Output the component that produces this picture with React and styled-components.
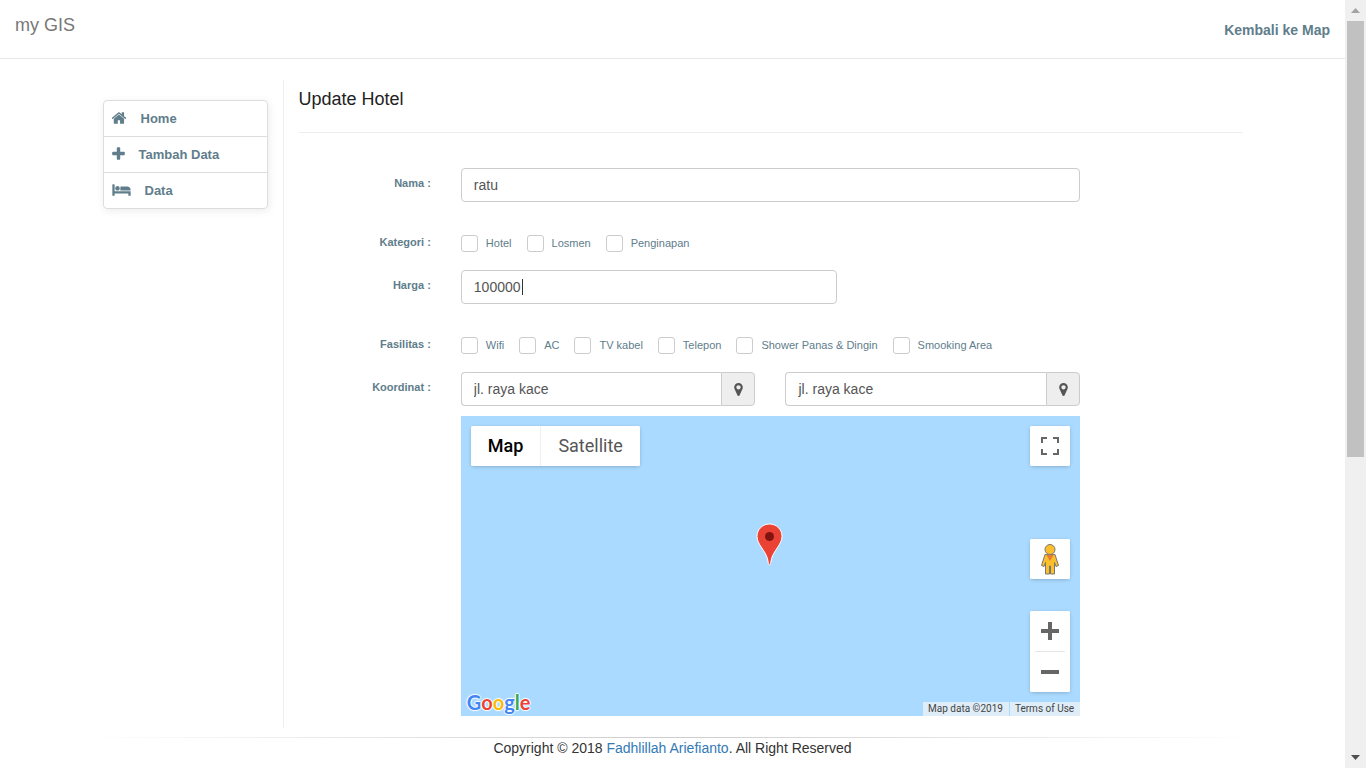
import React from 'react';
import styled, { createGlobalStyle } from 'styled-components';

const GlobalStyle = createGlobalStyle`
  * {
    box-sizing: border-box;
  }
  body {
    margin: 0;
    font-family: 'Liberation Sans', Arial, sans-serif;
    font-size: 14px;
    line-height: 20px;
    color: #333;
    background: #fff;
  }
  a {
    text-decoration: none;
  }
`;

const Screen = styled.div`
  display: flex;
  height: 100vh;
  overflow: hidden;
`;

const Page = styled.div`
  flex: 1;
  min-width: 0;
`;

const Scrollbar = styled.div`
  display: flex;
  flex-direction: column;
  align-items: center;
  width: 21px;
  background: #f0f0f0;
  .arrow {
    display: flex;
    align-items: center;
    justify-content: center;
    width: 21px;
    height: 21px;
  }
  .track {
    flex: 1;
  }
  .thumb {
    width: 17px;
    height: 60%;
    background: #c1c1c1;
  }
`;

const Navbar = styled.header`
  display: flex;
  justify-content: space-between;
  height: 59px;
  padding: 0 15px;
  border-bottom: 1px solid #e7e7e7;
  .brand {
    padding: 15px 0;
    font-size: 18px;
    color: #777;
  }
  .back {
    padding: 20px 0;
    font-weight: bold;
    color: #607d8b;
  }
`;

const Container = styled.div`
  display: flex;
  align-items: stretch;
  max-width: 1170px;
  margin: 21px auto 0;
`;

const Sidebar = styled.aside`
  width: 195px;
  padding: 20px 15px 0;
`;

const Menu = styled.nav`
  border: 1px solid #ddd;
  border-radius: 4px;
  box-shadow: 1px 2px 8px rgba(0, 0, 0, 0.08);
`;

const MenuLink = styled.a`
  display: flex;
  align-items: center;
  gap: 14px;
  height: 35px;
  padding: 0 8px;
  font-size: 13px;
  font-weight: bold;
  color: #607d8b;
  & + & {
    height: 36px;
    border-top: 1px solid #ddd;
  }
  svg {
    display: block;
    height: 16px;
    margin-bottom: 2px;
    fill: currentColor;
  }
`;

const Content = styled.main`
  flex: 1;
  min-width: 0;
  height: 648px;
  padding: 0 15px;
  border-left: 1px solid #eee;
  h1 {
    margin: 0 0 35px;
    padding: 9px 0 23px;
    border-bottom: 1px solid #eee;
    font-size: 18px;
    font-weight: normal;
    line-height: 20px;
    color: #222;
  }
`;

const FormRow = styled.div`
  display: grid;
  grid-template-columns: 2fr 10fr;
  margin: 0 -15px ${(props) => props.$gap}px;
  > label,
  > .label {
    padding: ${(props) => (props.$checks ? 0 : 6)}px 15px 0;
    font-size: 11px;
    font-weight: bold;
    line-height: 18px;
    text-align: right;
    color: #607d8b;
  }
`;

const Field = styled.div`
  position: relative;
  width: calc(${(props) => props.$cols} * 10%);
  padding: 0 15px;
`;

const TextInput = styled.input`
  display: block;
  width: 100%;
  height: 34px;
  padding: 6px 12px;
  border: 1px solid #ccc;
  border-radius: 4px;
  outline: 0;
  background: #fff;
  font: inherit;
  color: #555;
`;

const Caret = styled.span`
  position: absolute;
  top: 9px;
  left: 76px;
  width: 1px;
  height: 16px;
  background: #333;
`;

const Pair = styled.div`
  display: flex;
`;

const InputGroup = styled.div`
  display: flex;
  ${TextInput} {
    flex: 1;
    min-width: 0;
    border-right: 0;
    border-radius: 4px 0 0 4px;
  }
  .addon {
    display: flex;
    align-items: center;
    justify-content: center;
    width: 34px;
    border: 1px solid #ccc;
    border-radius: 0 4px 4px 0;
    background: #eee;
    color: #555;
  }
  svg {
    width: 9px;
    height: 13px;
    fill: currentColor;
  }
`;

const Checks = styled.div`
  display: flex;
  gap: 15px;
  height: 20px;
  padding: 0 15px;
`;

const Check = styled.label`
  display: flex;
  align-items: center;
  gap: 8px;
  font-size: 11px;
  white-space: nowrap;
  color: #607d8b;
  input {
    appearance: none;
    width: 17px;
    height: 17px;
    margin: 0;
    border: 1px solid #ccc;
    border-radius: 3px;
    background: #fff;
  }
  input:checked {
    background: #607d8b;
  }
`;

const MapBox = styled.div`
  position: relative;
  height: 300px;
  overflow: hidden;
  background: #aadaff;
  font-family: Roboto, sans-serif;
  button {
    display: flex;
    align-items: center;
    justify-content: center;
    padding: 0;
    border: 0;
    background: #fff;
    font: inherit;
  }
`;

const MapControl = styled.div`
  position: absolute;
  ${(props) => props.$place}
  display: flex;
  flex-direction: ${(props) => (props.$vertical ? 'column' : 'row')};
  align-items: center;
  overflow: hidden;
  border-radius: 2px;
  background: #fff;
  box-shadow: 0 1px 4px -1px rgba(0, 0, 0, 0.3);
  > button {
    min-width: 40px;
    height: 40px;
  }
  .type {
    padding: 0 17px;
    font-size: 18px;
    color: #565656;
  }
  .type.active {
    font-weight: 500;
    color: #000;
  }
  .type + .type {
    border-left: 1px solid #f0f0f0;
  }
  .line {
    width: 30px;
    height: 1px;
    background: #e6e6e6;
  }
`;

const Marker = styled.svg`
  position: absolute;
  top: 107px;
  left: 50%;
  width: 27px;
  height: 43px;
  margin-left: -14px;
`;

const Logo = styled.a`
  position: absolute;
  bottom: 2px;
  left: 6px;
  font-family: Lato, sans-serif;
  font-size: 20px;
  font-weight: bold;
  line-height: 24px;
  text-shadow: 1px 0 1px #fff, -1px 0 1px #fff, 0 1px 1px #fff, 0 -1px 1px #fff;
  .b {
    color: #4285f4;
  }
  .r {
    color: #ea4335;
  }
  .y {
    color: #fbbc05;
  }
  .g {
    color: #34a853;
  }
`;

const Legal = styled.div`
  position: absolute;
  right: 0;
  bottom: 0;
  display: flex;
  gap: 1px;
  font-size: 10px;
  line-height: 14px;
  > * {
    padding: 0 6px 0 5px;
    background: rgba(245, 245, 245, 0.7);
    color: #444;
  }
`;

const Footer = styled.footer`
  max-width: 1170px;
  margin: 9px auto 0;
  text-align: center;
  &::before {
    content: '';
    display: block;
    height: 1px;
    background: linear-gradient(to right, transparent, #ccc, transparent);
  }
  a {
    color: #337ab7;
  }
`;

const HomeIcon = () => (
  <svg viewBox="64 0 1664 1792" width="15">
    <path d="M1408 992v480q0 26-19 45t-45 19h-384v-384h-256v384h-384q-26 0-45-19t-19-45v-480q0-1 .5-3t.5-3l575-474 575 474q1 2 1 6zm223-69l-62 74q-8 9-21 11h-3q-13 0-21-7l-692-577-692 577q-12 8-24 7-13-2-21-11l-62-74q-8-10-7-23.5t11-21.5l719-599q32-26 76-26t76 26l244 204v-195q0-14 9-23t23-9h192q14 0 23 9t9 23v408l219 182q10 8 11 21.5t-7 23.5z" />
  </svg>
);

const PlusIcon = () => (
  <svg viewBox="192 0 1408 1792" width="13">
    <path d="M1600 736v192q0 40-28 68t-68 28h-416v416q0 40-28 68t-68 28h-192q-40 0-68-28t-28-68v-416h-416q-40 0-68-28t-28-68v-192q0-40 28-68t68-28h416v-416q0-40 28-68t68-28h192q40 0 68 28t28 68v416h416q40 0 68 28t28 68z" />
  </svg>
);

const BedIcon = () => (
  <svg viewBox="0 0 2048 1792" width="19">
    <path d="M256 1024h1728q26 0 45 19t19 45v448h-256v-256h-1536v256h-256v-1216q0-26 19-45t45-19h128q26 0 45 19t19 45v704zm576-320q0-106-75-181t-181-75-181 75-75 181 75 181 181 75 181-75 75-181zm1216 256v-64q0-159-112.5-271.5t-271.5-112.5h-704q-26 0-45 19t-19 45v384h1152z" />
  </svg>
);

const PinIcon = () => (
  <svg viewBox="384 128 1024 1536">
    <path d="M1152 640q0-106-75-181t-181-75-181 75-75 181 75 181 181 75 181-75 75-181zm256 0q0 109-33 179l-364 774q-16 33-47.5 52t-67.5 19-67.5-19-46.5-52l-365-774q-33-70-33-179 0-212 150-362t362-150 362 150 150 362z" />
  </svg>
);

const Pegman = () => (
  <svg width="20" height="32" viewBox="0 0 20 32">
    <path
      d="M5 11.500h10L18.500 22.500l-2.500 1-1.500-4V31H10.500v-8h-1v8H5.500V19.500l-1.500 4-2.500-1z"
      fill="#fbbf2b"
      stroke="#777"
      strokeLinejoin="round"
    />
    <path d="M6 11.500h8L10 18z" fill="#e07f35" />
    <circle cx="10" cy="6.500" r="5" fill="#fbbf2b" stroke="#777" />
  </svg>
);

const menu = [
  { label: 'Home', icon: <HomeIcon /> },
  { label: 'Tambah Data', icon: <PlusIcon /> },
  { label: 'Data', icon: <BedIcon /> },
];

const kategori = ['Hotel', 'Losmen', 'Penginapan'];

const fasilitas = [
  'Wifi',
  'AC',
  'TV kabel',
  'Telepon',
  'Shower Panas & Dingin',
  'Smooking Area',
];

const CheckRow = ({ label, options, gap }) => (
  <FormRow $gap={gap} $checks role="group" aria-label={label}>
    <span className="label">{label} :</span>
    <Checks>
      {options.map((option) => (
        <Check key={option}>
          <input type="checkbox" />
          {option}
        </Check>
      ))}
    </Checks>
  </FormRow>
);

const CoordInput = ({ id, label }) => (
  <Field $cols={4}>
    <InputGroup>
      <TextInput id={id} aria-label={label} defaultValue="jl. raya kace" />
      <span className="addon">
        <PinIcon />
      </span>
    </InputGroup>
  </Field>
);

const GoogleMap = () => (
  <MapBox>
    <MapControl $place="top: 10px; left: 10px;">
      <button type="button" className="type active">
        Map
      </button>
      <button type="button" className="type">
        Satellite
      </button>
    </MapControl>
    <MapControl $place="top: 10px; right: 10px;">
      <button type="button" aria-label="Fullscreen">
        <svg width="18" height="18" viewBox="0 0 18 18" fill="#666">
          <path d="M0 0h6v2H2v4H0zM12 0h6v6h-2V2h-4zM0 12h2v4h4v2H0zM16 12h2v6h-6v-2h4z" />
        </svg>
      </button>
    </MapControl>
    <Marker viewBox="0 0 27 43">
      <path
        d="M13.500 1C6.500 1 1 6.500 1 13.300c0 4 1.800 7 4 10.500 3.600 5.500 6.500 9 7.300 16 .2 2.800 2.200 2.800 2.400 0 .8-7 3.700-10.500 7.300-16 2.200-3.500 4-6.500 4-10.500C26 6.500 20.500 1 13.500 1z"
        fill="#ea4335"
        stroke="#fff"
        strokeWidth="1"
      />
      <circle cx="13.500" cy="13.500" r="4.500" fill="#811411" />
    </Marker>
    <MapControl $place="right: 10px; bottom: 137px;">
      <button type="button" aria-label="Street View">
        <Pegman />
      </button>
    </MapControl>
    <MapControl $vertical $place="right: 10px; bottom: 24px;">
      <button type="button" aria-label="Zoom in">
        <svg width="18" height="18" viewBox="0 0 18 18" fill="#666">
          <path d="M7 0h4v7h7v4h-7v7H7v-7H0V7h7z" />
        </svg>
      </button>
      <div className="line" />
      <button type="button" aria-label="Zoom out">
        <svg width="18" height="18" viewBox="0 0 18 18" fill="#666">
          <path d="M0 7h18v4H0z" />
        </svg>
      </button>
    </MapControl>
    <Logo href="#google">
      <span className="b">G</span>
      <span className="r">o</span>
      <span className="y">o</span>
      <span className="b">g</span>
      <span className="g">l</span>
      <span className="r">e</span>
    </Logo>
    <Legal>
      <span>Map data ©2019</span>
      <a href="#terms">Terms of Use</a>
    </Legal>
  </MapBox>
);

const App = () => {
  return (
    <Screen>
      <GlobalStyle />
      <Page>
        <Navbar>
          <a className="brand" href="#top">
            my GIS
          </a>
          <a className="back" href="#map">
            Kembali ke Map
          </a>
        </Navbar>
        <Container>
          <Sidebar>
            <Menu>
              {menu.map(({ label, icon }) => (
                <MenuLink key={label} href="#menu">
                  {icon}
                  {label}
                </MenuLink>
              ))}
            </Menu>
          </Sidebar>
          <Content>
            <h1>Update Hotel</h1>
            <form>
              <FormRow $gap={31}>
                <label htmlFor="nama">Nama :</label>
                <Field $cols={8}>
                  <TextInput id="nama" defaultValue="ratu" />
                </Field>
              </FormRow>
              <CheckRow label="Kategori" options={kategori} gap={17} />
              <FormRow $gap={31}>
                <label htmlFor="harga">Harga :</label>
                <Field $cols={5}>
                  <TextInput id="harga" defaultValue="100000" />
                  <Caret />
                </Field>
              </FormRow>
              <CheckRow label="Fasilitas" options={fasilitas} gap={17} />
              <FormRow $gap={10}>
                <label htmlFor="lat">Koordinat :</label>
                <Pair>
                  <CoordInput id="lat" label="Latitude" />
                  <CoordInput id="lng" label="Longitude" />
                </Pair>
              </FormRow>
              <FormRow $gap={0}>
                <span />
                <Field $cols={8}>
                  <GoogleMap />
                </Field>
              </FormRow>
            </form>
          </Content>
        </Container>
        <Footer>
          Copyright © 2018 <a href="#author">Fadhlillah Ariefianto</a>. All Right Reserved
        </Footer>
      </Page>
      <Scrollbar aria-hidden="true">
        <div className="arrow">
          <svg width="9" height="5" viewBox="0 0 9 5" fill="#a3a3a3">
            <path d="M0 5L4.500 0 9 5z" />
          </svg>
        </div>
        <div className="track">
          <div className="thumb" />
        </div>
        <div className="arrow">
          <svg width="9" height="5" viewBox="0 0 9 5" fill="#505050">
            <path d="M0 0h9L4.500 5z" />
          </svg>
        </div>
      </Scrollbar>
    </Screen>
  );
};

export default App;
